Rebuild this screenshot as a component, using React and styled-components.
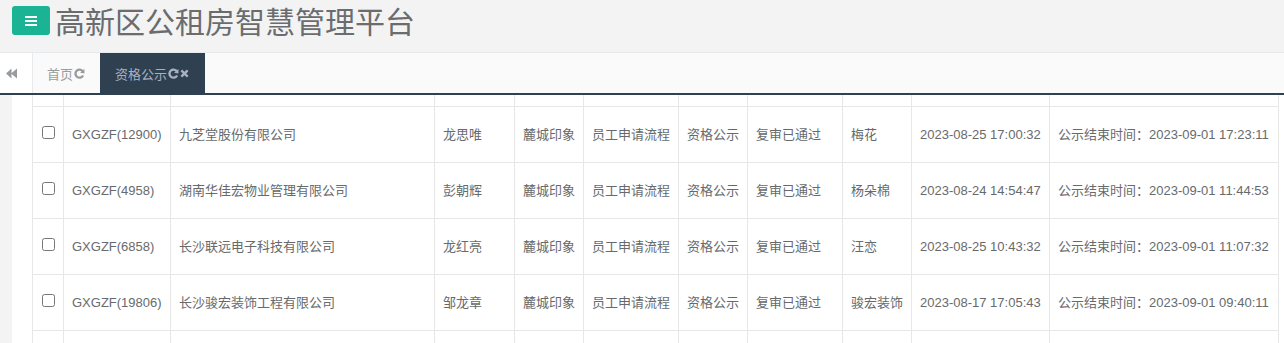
import React from 'react';
import styled, { createGlobalStyle } from 'styled-components';

const GlobalStyle = createGlobalStyle`
  html, body {
    margin: 0;
    padding: 0;
    height: 343px;
    overflow: hidden;
    background: #ffffff;
  }
  body {
    font-family: 'Liberation Sans', 'Noto Sans CJK SC', sans-serif;
    color: #676a6c;
    font-size: 13px;
  }
`;

const Page = styled.div`
  display: flex;
  flex-direction: column;
  height: 343px;
`;

const Header = styled.header`
  height: 53px;
  flex-shrink: 0;
  box-sizing: border-box;
  display: flex;
  align-items: flex-start;
  gap: 5px;
  padding: 6px 12px 0;
  background: #f3f3f4;
  border-bottom: 1px solid #e7eaec;
`;

const MenuButton = styled.button`
  width: 38px;
  height: 29px;
  border: none;
  border-radius: 3px;
  background: #1ab394;
  display: flex;
  align-items: center;
  justify-content: center;
  padding: 0;
`;

const Title = styled.h1`
  margin: -8px 0 0;
  font-family: 'Noto Sans CJK SC', sans-serif;
  font-size: 30px;
  line-height: 44px;
  font-weight: normal;
  color: #6a6c6e;
`;

const TabBar = styled.nav`
  height: 40px;
  flex-shrink: 0;
  display: flex;
  background: #fafafa;
  border-bottom: 2px solid #2f4050;
`;

const BackButton = styled.div`
  width: 33px;
  display: flex;
  align-items: center;
  padding-left: 6px;
  box-sizing: border-box;
  border-right: 1px solid #e7eaec;
  background: #fff;
`;

const Tab = styled.div`
  display: flex;
  align-items: center;
  padding: 0 ${(p) => (p.active ? 16 : 15)}px 0 ${(p) => (p.active ? 15 : 14)}px;
  background: ${(p) => (p.active ? '#2f4050' : 'transparent')};
  color: ${(p) => (p.active ? '#a7b1c2' : '#999c9e')};
  font-size: 13px;
  gap: 1px;
`;

const Body = styled.main`
  flex: 1;
  display: flex;
  background: #f3f3f4;
  padding-left: 12px;
  overflow: hidden;
`;

const Panel = styled.div`
  flex: 1;
  background: #ffffff;
  padding-left: 20px;
  overflow: hidden;
`;

const Table = styled.table`
  border-collapse: collapse;
  table-layout: fixed;
  width: 1247px;
  margin-top: -45px;
`;

const Cell = styled.td`
  border: 1px solid #e7e7e7;
  height: 56px;
  box-sizing: border-box;
  padding: 0 8px;
  white-space: nowrap;
  overflow: hidden;
  vertical-align: middle;
  color: #676a6c;
  line-height: 16px;
`;

const CheckBox = styled.input`
  display: block;
  margin: -4px 0 0 1px;
  width: 13px;
  height: 13px;
`;

const Refresh = ({ color }) => (
  <svg width="11" height="11" viewBox="0 0 12 12">
    <path d="M9.6 3.6 A4.4 4.4 0 1 0 9.9 8.2" fill="none" stroke={color} strokeWidth="2.6" />
    <path d="M11.4 1 L11.4 6 L6.6 5.2 Z" fill={color} />
  </svg>
);

const Close = ({ color }) => (
  <svg width="9" height="9" viewBox="0 0 10 10">
    <path d="M1.5 1.5 L8.5 8.5 M8.5 1.5 L1.5 8.5" stroke={color} strokeWidth="2.6" />
  </svg>
);

const widths = [31, 107, 264, 80, 69, 95, 69, 95, 69, 138, 229];

// first row is the one scrolled out of view above the tab bar
const rows = [
  null,
  ['GXGZF(12900)', '九芝堂股份有限公司', '龙思唯', '麓城印象', '员工申请流程', '资格公示', '复审已通过', '梅花', '2023-08-25 17:00:32', '公示结束时间：2023-09-01 17:23:11'],
  ['GXGZF(4958)', '湖南华佳宏物业管理有限公司', '彭朝辉', '麓城印象', '员工申请流程', '资格公示', '复审已通过', '杨朵棉', '2023-08-24 14:54:47', '公示结束时间：2023-09-01 11:44:53'],
  ['GXGZF(6858)', '长沙联远电子科技有限公司', '龙红亮', '麓城印象', '员工申请流程', '资格公示', '复审已通过', '汪恋', '2023-08-25 10:43:32', '公示结束时间：2023-09-01 11:07:32'],
  ['GXGZF(19806)', '长沙骏宏装饰工程有限公司', '邹龙章', '麓城印象', '员工申请流程', '资格公示', '复审已通过', '骏宏装饰', '2023-08-17 17:05:43', '公示结束时间：2023-09-01 09:40:11'],
  null,
];

export default function App() {
  return (
    <Page>
      <GlobalStyle />
      <Header>
        <MenuButton>
          <svg width="12" height="10" viewBox="0 0 12 10">
            <rect y="0" width="12" height="2" fill="#fff" />
            <rect y="4" width="12" height="2" fill="#fff" />
            <rect y="8" width="12" height="2" fill="#fff" />
          </svg>
        </MenuButton>
        <Title>高新区公租房智慧管理平台</Title>
      </Header>
      <TabBar>
        <BackButton>
          <svg width="11" height="11" viewBox="0 0 11 11">
            <path d="M0 5.5 L5.5 0.5 L5.5 10.5 Z M5 5.5 L11 0.5 L11 10.5 Z" fill="#999c9e" />
          </svg>
        </BackButton>
        <Tab>
          首页
          <Refresh color="#999c9e" />
        </Tab>
        <Tab active>
          资格公示
          <Refresh color="#a7b1c2" />
          <Close color="#a7b1c2" />
        </Tab>
      </TabBar>
      <Body>
        <Panel>
          <Table>
            <colgroup>
              {widths.map((w, i) => (
                <col key={i} style={{ width: w }} />
              ))}
            </colgroup>
            <tbody>
              {rows.map((r, ri) => (
                <tr key={ri}>
                  {r ? (
                    <>
                      <Cell>
                        <CheckBox type="checkbox" />
                      </Cell>
                      {r.map((v, i) => (
                        <Cell key={i}>{v}</Cell>
                      ))}
                    </>
                  ) : (
                    widths.map((w, i) => <Cell key={i} />)
                  )}
                </tr>
              ))}
            </tbody>
          </Table>
        </Panel>
      </Body>
    </Page>
  );
}
